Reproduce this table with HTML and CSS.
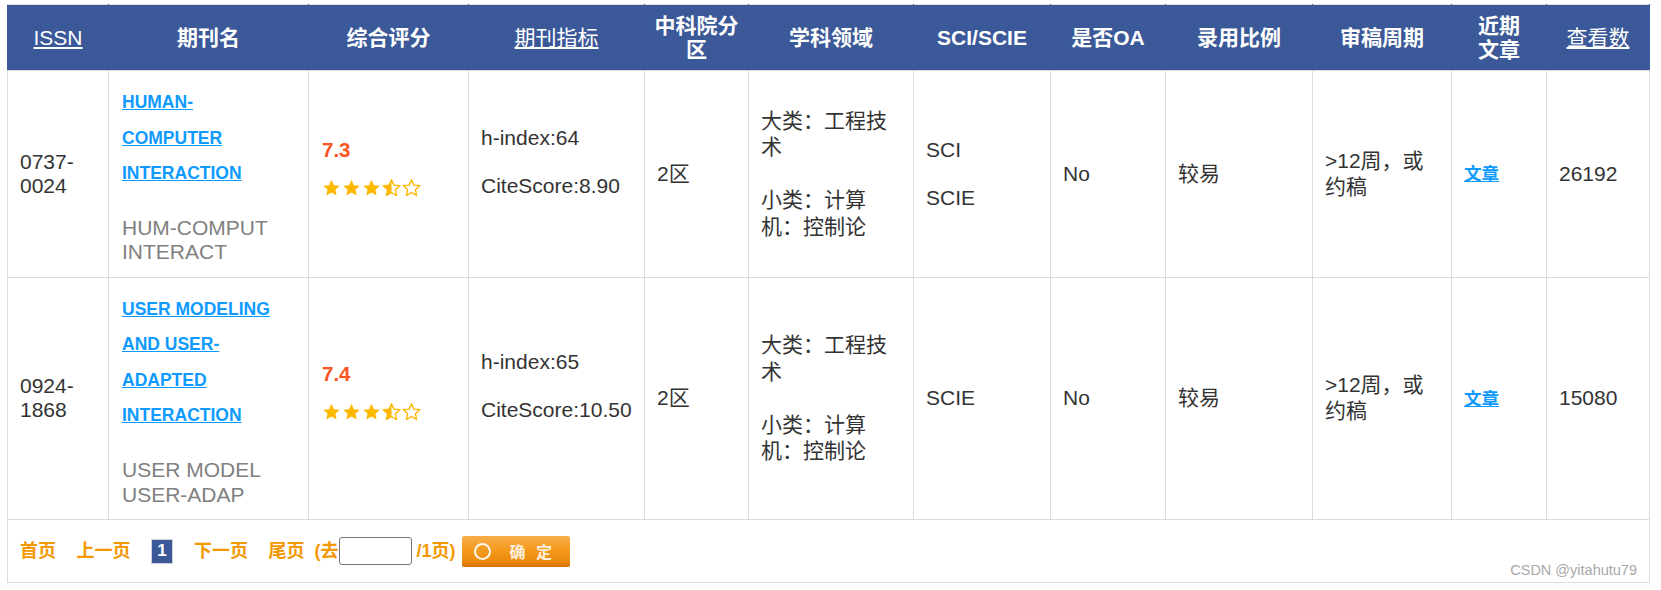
FILE: index.html
```html
<!DOCTYPE html>
<html lang="zh-CN">
<head>
<meta charset="utf-8">
<title>期刊列表</title>
<link rel="stylesheet" href="styles.css">
</head>
<body>
<svg class="defs" width="0" height="0" aria-hidden="true">
  <defs>
    <polygon id="star" points="12,1.6 15.06,8.39 22.46,9.2 16.95,14.21 18.47,21.5 12,17.8 5.53,21.5 7.05,14.21 1.54,9.2 8.94,8.39"/>
    <clipPath id="lefthalf"><rect x="0" y="0" width="12" height="24"/></clipPath>
  </defs>
</svg>
<div class="page">
<table class="grid">
  <colgroup>
    <col class="c-issn"><col class="c-name"><col class="c-score"><col class="c-index">
    <col class="c-zone"><col class="c-field"><col class="c-sci"><col class="c-oa">
    <col class="c-ratio"><col class="c-cycle"><col class="c-recent"><col class="c-views">
  </colgroup>
  <thead>
    <tr>
      <th><a href="#">ISSN</a></th>
      <th>期刊名</th>
      <th>综合评分</th>
      <th><a href="#">期刊指标</a></th>
      <th>中科院分区</th>
      <th>学科领域</th>
      <th>SCI/SCIE</th>
      <th>是否OA</th>
      <th>录用比例</th>
      <th>审稿周期</th>
      <th class="narrow">近期文章</th>
      <th><a href="#">查看数</a></th>
    </tr>
  </thead>
  <tbody>
    <tr>
      <td>0737-0024</td>
      <td class="name">
        <div class="links"><a href="#">HUMAN-COMPUTER INTERACTION</a></div>
        <div class="abbr">HUM-COMPUT INTERACT</div>
      </td>
      <td class="score">
        <div class="num">7.3</div>
        <div class="stars">
          <svg class="star" viewBox="0 0 24 24"><use href="#star" class="fill"/></svg>
          <svg class="star" viewBox="0 0 24 24"><use href="#star" class="fill"/></svg>
          <svg class="star" viewBox="0 0 24 24"><use href="#star" class="fill"/></svg>
          <svg class="star" viewBox="0 0 24 24"><use href="#star" class="line"/><use href="#star" class="fill" clip-path="url(#lefthalf)"/></svg>
          <svg class="star" viewBox="0 0 24 24"><use href="#star" class="line"/></svg>
        </div>
      </td>
      <td class="metrics">h-index:64<br><br>CiteScore:8.90</td>
      <td class="cjk">2区</td>
      <td class="cjk">大类：工程技术<br><br>小类：计算机：控制论</td>
      <td>SCI<br><br>SCIE</td>
      <td>No</td>
      <td class="cjk">较易</td>
      <td class="cjk">&gt;12周，或约稿</td>
      <td><a class="art" href="#">文章</a></td>
      <td>26192</td>
    </tr>
    <tr>
      <td>0924-1868</td>
      <td class="name">
        <div class="links"><a href="#">USER MODELING AND USER-ADAPTED INTERACTION</a></div>
        <div class="abbr">USER MODEL USER-ADAP</div>
      </td>
      <td class="score">
        <div class="num">7.4</div>
        <div class="stars">
          <svg class="star" viewBox="0 0 24 24"><use href="#star" class="fill"/></svg>
          <svg class="star" viewBox="0 0 24 24"><use href="#star" class="fill"/></svg>
          <svg class="star" viewBox="0 0 24 24"><use href="#star" class="fill"/></svg>
          <svg class="star" viewBox="0 0 24 24"><use href="#star" class="line"/><use href="#star" class="fill" clip-path="url(#lefthalf)"/></svg>
          <svg class="star" viewBox="0 0 24 24"><use href="#star" class="line"/></svg>
        </div>
      </td>
      <td class="metrics">h-index:65<br><br>CiteScore:10.50</td>
      <td class="cjk">2区</td>
      <td class="cjk">大类：工程技术<br><br>小类：计算机：控制论</td>
      <td>SCIE</td>
      <td>No</td>
      <td class="cjk">较易</td>
      <td class="cjk">&gt;12周，或约稿</td>
      <td><a class="art" href="#">文章</a></td>
      <td>15080</td>
    </tr>
    <tr>
      <td class="pager-cell" colspan="12">
        <div class="pager">
          <a href="#" class="pg">首页</a>
          <a href="#" class="pg">上一页</a>
          <span class="cur">1</span>
          <a href="#" class="pg">下一页</a>
          <a href="#" class="pg last">尾页</a>
          <span class="go">(去</span><input class="goto" type="text"><span class="total">/1页)</span>
          <button class="ok" type="button"><span class="ring"></span><span class="ok-text">确 定</span></button>
        </div>
      </td>
    </tr>
  </tbody>
</table>
</div>
<div class="watermark">CSDN @yitahutu79</div>
</body>
</html>
```
FILE: styles.css
```css
* { box-sizing: border-box; }

html, body {
  margin: 0;
  background: #fff;
}

body {
  position: relative;
  width: 1661px;
  height: 590px;
  overflow: hidden;
  font-family: "Liberation Sans", Arial, "Noto Sans CJK SC", sans-serif;
  color: #333;
}

.defs {
  position: absolute;
  width: 0;
  height: 0;
  overflow: hidden;
}

.page {
  padding: 4px 0 0 7px;
}

.grid {
  border-collapse: collapse;
  table-layout: fixed;
  width: 1642px;
  font-size: 21px;
}

.c-issn { width: 101px; }
.c-name { width: 200px; }
.c-score { width: 160px; }
.c-index { width: 176px; }
.c-zone { width: 104px; }
.c-field { width: 165px; }
.c-sci { width: 137px; }
.c-oa { width: 115px; }
.c-ratio { width: 147px; }
.c-cycle { width: 139px; }
.c-recent { width: 95px; }
.c-views { width: 103px; }

.grid th {
  background: #3b5998;
  color: #fff;
  font-weight: bold;
  height: 66px;
  padding: 0 8px;
  line-height: 23.5px;
  text-align: center;
  vertical-align: middle;
  border-top: 1px solid #dcdcdc;
  border-bottom: 1px solid #dcdcdc;
  border-left: 1px solid #3b5998;
  border-right: 1px solid #3b5998;
}

.grid th.narrow {
  padding: 0 18px;
}

.grid th a {
  color: #fff;
  font-weight: normal;
  text-decoration: underline;
}

.grid td {
  border: 1px solid #dcdcdc;
  padding: 13px 12px;
  vertical-align: middle;
  text-align: left;
  line-height: 24px;
}

.grid td.cjk {
  line-height: 26.4px;
}

.grid td.name {
  padding: 14px 30px 12px 13px;
}

.links {
  font-size: 17.5px;
  font-weight: bold;
  line-height: 35.5px;
}

.links a {
  color: #0e9aff;
  text-decoration: underline;
}

.abbr {
  margin-top: 24.5px;
  color: #808080;
  line-height: 24.4px;
}

.grid td.score {
  padding-left: 13px;
}

.num {
  color: #fb5522;
  font-weight: bold;
  font-size: 20.5px;
  line-height: 24px;
}

.stars {
  display: flex;
  gap: 1px;
  height: 20px;
  margin-top: 16px;
  margin-bottom: 12.5px;
}

.star {
  width: 19px;
  height: 20px;
}

.star .fill { fill: #ffb800; }
.star .line {
  fill: none;
  stroke: #ffb800;
  stroke-width: 1.7;
  stroke-linejoin: round;
}

.metrics::after {
  content: "";
  display: block;
  height: 24px;
}

.art {
  color: #0e9aff;
  font-weight: bold;
  font-size: 17.5px;
  text-decoration: underline;
}

.grid td.pager-cell {
  height: 63px;
  padding: 0 12px;
}

.pager {
  display: flex;
  align-items: center;
  font-size: 18px;
  font-weight: bold;
  color: #f39800;
}

.pg {
  color: #f39800;
  text-decoration: none;
  margin-right: 20.5px;
}

.pg.last {
  margin-right: 0;
}

.cur {
  display: inline-flex;
  align-items: center;
  justify-content: center;
  width: 22px;
  height: 25px;
  background: #3b5998;
  color: #fff;
  border: 1px solid #c9d1e3;
  margin-right: 21px;
  font-size: 17px;
}

.go {
  margin-left: 10px;
}

.goto {
  width: 73px;
  height: 28px;
  border: 1px solid #767676;
  border-radius: 3px;
  background: #fff;
  margin: 0;
  padding: 0 4px;
}

.total {
  margin-left: 5px;
}

.ok {
  display: inline-flex;
  align-items: center;
  width: 108px;
  height: 31px;
  margin-left: 6px;
  padding: 0 0 0 12px;
  border: 0;
  border-radius: 2px;
  background: linear-gradient(#f9ad49 0%, #f39a1e 45%, #ee8a0c 80%, #d46f00 100%);
  font-family: "Liberation Sans", "Noto Sans CJK SC", sans-serif;
  font-weight: bold;
  font-size: 16px;
  color: #fdf0dc;
  cursor: pointer;
}

.ring {
  width: 17px;
  height: 17px;
  border: 2.5px solid #fff8ec;
  border-radius: 50%;
  margin-right: 19px;
}

.ok-text {
  letter-spacing: 3px;
}

.watermark {
  position: absolute;
  right: 24px;
  top: 562px;
  font-size: 14.5px;
  color: #a8a8a8;
  font-family: "Liberation Sans", sans-serif;
}
```
